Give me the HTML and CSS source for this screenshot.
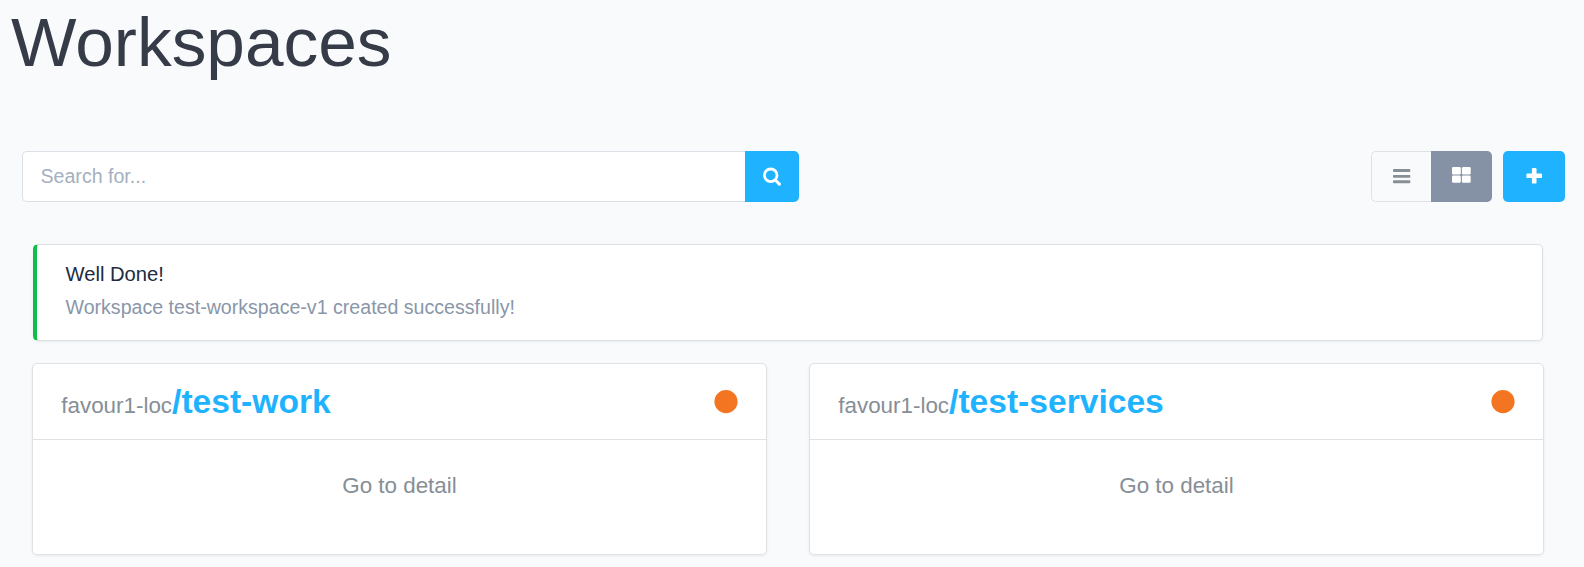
FILE: index.html
```html
<!DOCTYPE html>
<html lang="en">
<head>
<meta charset="utf-8">
<title>Workspaces</title>
<link rel="stylesheet" href="styles.css">
</head>
<body>
<h1 class="title">Workspaces</h1>
<div class="toolbar">
  <form class="search">
    <input class="search-input" type="text" placeholder="Search for..." aria-label="Search">
    <button class="search-button" type="button" aria-label="Search">
      <svg width="20" height="20" viewBox="0 0 20 20" fill="none" stroke="#fff"><circle cx="8.7" cy="8.3" r="6.3" stroke-width="2.8"/><path d="M13.3 13l4.1 4.1" stroke-width="3.1" stroke-linecap="round"/></svg>
    </button>
  </form>
  <div class="actions">
    <div class="view-switch">
      <button class="view" type="button" aria-label="List view"><svg width="18" height="15" viewBox="0 0 18 15" fill="#868e96"><rect y="0" width="17.3" height="3" rx=".7"/><rect y="6" width="17.3" height="2.7" rx=".7"/><rect y="11.3" width="17.3" height="2.9" rx=".7"/></svg></button>
      <button class="view view-active" type="button" aria-label="Grid view"><svg width="19" height="16" viewBox="0 0 19 16" fill="#fff"><rect width="8.8" height="7.5" rx="1.3"/><rect x="9.9" width="8.8" height="7.5" rx="1.3"/><rect y="8.5" width="8.8" height="7.3" rx="1.3"/><rect x="9.9" y="8.5" width="8.8" height="7.3" rx="1.3"/></svg></button>
    </div>
    <button class="add" type="button" aria-label="Add workspace"><svg width="16" height="16" viewBox="0 0 16 16" fill="#fff"><rect x="5.9" width="4.6" height="15.6" rx="1.2"/><rect x=".4" y="5.4" width="15.6" height="4.7" rx="1.2"/></svg></button>
  </div>
</div>
<div class="alert">
  <div class="alert-title">Well Done!</div>
  <div class="alert-text">Workspace test-workspace-v1 created successfully!</div>
</div>
<div class="cards">
  <section class="card">
    <header class="card-header">
      <div><span class="owner">favour1-loc</span><span class="name">/test-work</span></div>
      <svg class="status" width="24" height="24" viewBox="0 0 24 24"><circle cx="12" cy="11.6" r="11.6"/></svg>
    </header>
    <div class="card-body">Go to detail</div>
  </section>
  <section class="card">
    <header class="card-header">
      <div><span class="owner">favour1-loc</span><span class="name">/test-services</span></div>
      <svg class="status" width="24" height="24" viewBox="0 0 24 24"><circle cx="12" cy="11.6" r="11.6"/></svg>
    </header>
    <div class="card-body">Go to detail</div>
  </section>
</div>
</body>
</html>
```
FILE: styles.css
```css
* { box-sizing: border-box; }
body {
  margin: 0;
  height: 567px;
  overflow: hidden;
  background: #f9fafc;
  font-family: "Liberation Sans", Arial, sans-serif;
  color: #868e96;
}
button, input { font: inherit; margin: 0; padding: 0; }
button { display: flex; align-items: center; justify-content: center; border: 0; }
svg { display: block; }
.title {
  margin: 0;
  padding: 3px 0 0 11px;
  height: 151px;
  font-size: 69.4px;
  line-height: 78px;
  font-weight: 400;
  color: #353c48;
}
.toolbar {
  display: flex;
  justify-content: space-between;
  height: 51px;
  padding: 0 19px 0 22px;
}
.search { display: flex; width: 777px; }
.search-input {
  flex: 1;
  min-width: 0;
  padding: 0 17.5px;
  border: 1px solid #dbe0e6;
  border-right: 0;
  border-radius: 5px 0 0 5px;
  background: #fff;
  font-size: 19.6px;
  outline: 0;
}
.search-input::placeholder { color: #a5afc0; opacity: 1; }
.search-button { width: 54px; background: #1fb3ff; border-radius: 0 5px 5px 0; }
.actions { display: flex; gap: 11px; }
.view-switch { display: flex; }
.view {
  width: 60px;
  background: transparent;
  border: 1px solid #dee2e6;
  border-right: 0;
  border-radius: 5px 0 0 5px;
  padding-bottom: 0;
}
.view-active { width: 61px; background: #8592a5; border: 0; border-radius: 0 5px 5px 0; padding-bottom: 3px; }
.add { width: 62px; background: #1fb3ff; border-radius: 5px; padding-bottom: 2px; }
.alert {
  margin: 42px 41px 0 33px;
  height: 97px;
  padding: 14px 28.5px 0;
  border: 1px solid #dbe0e6;
  border-left: 4px solid #0fbf48;
  border-radius: 5px;
  background: #fff;
  box-shadow: 0 1px 3px rgba(0, 0, 0, .06);
  line-height: 30px;
}
.alert-title { color: #212b40; height: 33px; font-size: 20.2px; }
.alert-text { color: #8996a9; font-size: 19.6px; }
.cards { display: grid; grid-template-columns: 735px 735px; gap: 42px; margin: 22px 0 0 32px; }
.card {
  height: 192px;
  border: 1px solid #e0e2e6;
  border-radius: 5px;
  background: #fff;
  box-shadow: 0 1px 3px rgba(0, 0, 0, .07);
  font-size: 22.4px;
}
.card-header {
  display: flex;
  align-items: center;
  justify-content: space-between;
  height: 76px;
  padding: 0 28.3px;
  border-bottom: 1px solid #e0e2e6;
}
.name { font-size: 33.6px; font-weight: 700; color: #1fb3ff; }
.status { fill: #f47521; }
.card-body { padding-top: 33px; line-height: 26px; text-align: center; }
```
